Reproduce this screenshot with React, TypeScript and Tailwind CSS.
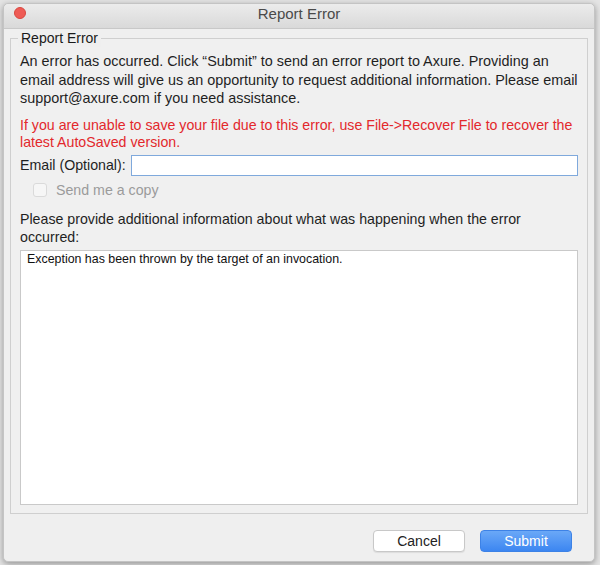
import { useState } from "react";

const FONT = { fontFamily: '"Liberation Sans", Arial, sans-serif' };

function TitleBar() {
  return (
    <div className="relative h-[25px] flex items-start justify-center pt-[1px] rounded-t-[5px] border-b border-[#c8c8c8] bg-gradient-to-b from-[#ececec] to-[#d9d9d9]">
      <span className="absolute left-[10px] top-[3px] w-[12px] h-[12px] rounded-full bg-[#ee5b55] border border-[#d9473f]" />
      <span className="text-[15px] leading-[18px] text-[#4a4a4a]">Report Error</span>
    </div>
  );
}

export default function App() {
  const [email, setEmail] = useState("");
  const [sendCopy, setSendCopy] = useState(false);
  const [details, setDetails] = useState(
    "Exception has been thrown by the target of an invocation."
  );

  return (
    <div style={FONT} className="w-[600px] h-[565px] bg-[#e4e4e4] pt-[3px] pl-[3px]">
      <div className="w-[592px] h-[559px] flex flex-col rounded-[5px] bg-[#ececec] shadow-[0_2px_6px_rgba(0,0,0,0.35)] border border-[#c4c4c4]">
        <TitleBar />

        <div className="flex-1 flex flex-col px-[6px] pt-[9px] bg-[#efefef] rounded-b-[5px]">
          {/* group box */}
          <div className="relative h-[476px] border border-[#cfcfcf] bg-[#f0f0f0] px-[9px] pt-[13px] pb-[8px] flex flex-col">
            <span className="absolute -top-[10px] left-[7px] px-[3px] bg-[#efefef] text-[14px] leading-[18px] text-[#1a1a1a]">
              Report Error
            </span>

            <p className="text-[14.4px] leading-[18.5px] text-[#1f1f1f] whitespace-nowrap">
              An error has occurred. Click “Submit” to send an error report to Axure. Providing an
              <br />
              email address will give us an opportunity to request additional information. Please email
              <br />
              support@axure.com if you need assistance.
            </p>

            <p className="mt-[9px] text-[14.2px] leading-[17.5px] text-[#e3282c] whitespace-nowrap">
              If you are unable to save your file due to this error, use File-&gt;Recover File to recover the
              <br />
              latest AutoSaved version.
            </p>

            <div className="mt-[3px] flex items-center gap-[5px]">
              <label className="text-[14.2px] text-[#1f1f1f] whitespace-nowrap">Email (Optional):</label>
              <input
                value={email}
                onChange={(e) => setEmail(e.target.value)}
                className="flex-1 h-[21px] bg-white border border-[#7fa9dc] outline-none text-[13px] px-[3px]"
              />
            </div>

            <label className="mt-[4px] ml-[13px] flex items-center gap-[9px]">
              <input
                type="checkbox"
                checked={sendCopy}
                onChange={(e) => setSendCopy(e.target.checked)}
                className="appearance-none w-[14px] h-[14px] rounded-[3px] border border-[#dadada] bg-[#f6f6f6]"
              />
              <span className="text-[14.2px] text-[#9b9b9b]">Send me a copy</span>
            </label>

            <p className="mt-[9px] text-[14.2px] leading-[18px] text-[#1f1f1f] whitespace-nowrap">
              Please provide additional information about what was happening when the error
              <br />
              occurred:
            </p>

            <textarea
              value={details}
              onChange={(e) => setDetails(e.target.value)}
              className="mt-[4px] flex-1 resize-none bg-white border border-[#c9c9c9] outline-none px-[6px] py-0 text-[12.4px] leading-[16px] text-[#111]"
            />
          </div>

          <div className="flex justify-end gap-[15px] pr-[16px] mt-[16px]">
            <button className="w-[92px] h-[22px] rounded-[4px] bg-white border border-[#c8c8c8] shadow-[0_1px_1px_rgba(0,0,0,0.08)] text-[14px] text-[#222]">
              Cancel
            </button>
            <button className="w-[92px] h-[22px] rounded-[4px] bg-gradient-to-b from-[#6aa8f7] to-[#3c86f1] border border-[#3d82e6] text-[14px] text-white">
              Submit
            </button>
          </div>
        </div>
      </div>
    </div>
  );
}
